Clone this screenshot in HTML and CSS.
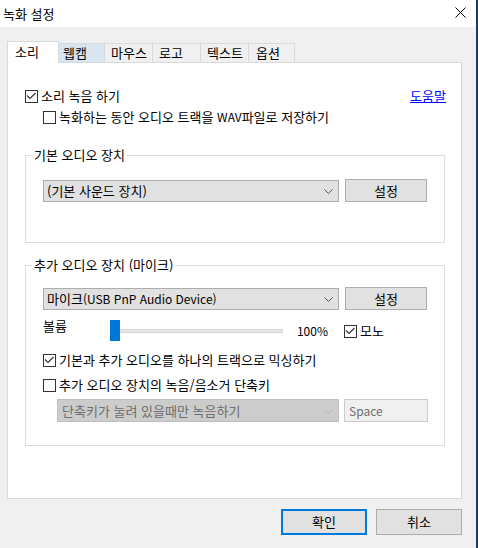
FILE: index.html
```html
<!DOCTYPE html>
<html lang="ko">
<head>
<meta charset="utf-8">
<title>녹화 설정</title>
<link rel="stylesheet" href="styles.css">
</head>
<body>
<div class="window">
  <div class="titlebar">
    <span class="title">녹화 설정</span>
    <svg class="close" width="11" height="11" viewBox="0 0 11 11"><path d="M0.5 0.5L10.5 10.5M10.5 0.5L0.5 10.5" stroke="#000" stroke-width="1" fill="none"/></svg>
  </div>
  <div class="body">
    <div class="tabs">
      <div class="tab active tab-sound">소리</div>
      <div class="tab hover tab-cam">웹캠</div>
      <div class="tab tab-mouse">마우스</div>
      <div class="tab tab-logo">로고</div>
      <div class="tab tab-text">텍스트</div>
      <div class="tab last tab-opt">옵션</div>
    </div>
    <div class="panel">
      <div class="row row-rec">
        <div class="check">
          <span class="box"><svg width="11" height="11" viewBox="0 0 11 11"><path d="M1 4.5L4 7.5L9.5 2" stroke="#333" stroke-width="1.1" fill="none"/></svg></span>
          <span class="label">소리 녹음 하기</span>
        </div>
        <a class="help" href="#">도움말</a>
      </div>
      <div class="row row-wav">
        <div class="check">
          <span class="box"></span>
          <span class="label">녹화하는 동안 오디오 트랙을 <span class="latin">WAV</span>파일로 저장하기</span>
        </div>
      </div>

      <fieldset class="group group-main">
        <legend>기본 오디오 장치</legend>
        <div class="device-row">
          <div class="combo"><span class="combo-text">(기본 사운드 장치)</span><svg class="chev" width="9" height="5" viewBox="0 0 9 5"><path d="M0.5 0.5L4.5 4.5L8.5 0.5" stroke="#555" stroke-width="1" fill="none"/></svg></div>
          <div class="btn btn-set">설정</div>
        </div>
      </fieldset>

      <fieldset class="group group-extra">
        <legend>추가 오디오 장치 (마이크)</legend>
        <div class="device-row">
          <div class="combo"><span class="combo-text">마이크<span class="latin">(USB PnP Audio Device)</span></span><svg class="chev" width="9" height="5" viewBox="0 0 9 5"><path d="M0.5 0.5L4.5 4.5L8.5 0.5" stroke="#555" stroke-width="1" fill="none"/></svg></div>
          <div class="btn btn-set">설정</div>
        </div>
        <div class="volume-row">
          <span class="vol-label">볼륨</span>
          <div class="slider">
            <div class="track"></div>
            <div class="thumb"></div>
          </div>
          <span class="pct latin">100%</span>
          <div class="check mono">
            <span class="box"><svg width="11" height="11" viewBox="0 0 11 11"><path d="M1 4.5L4 7.5L9.5 2" stroke="#333" stroke-width="1.1" fill="none"/></svg></span>
            <span class="label">모노</span>
          </div>
        </div>
        <div class="row row-mix">
          <div class="check">
            <span class="box"><svg width="11" height="11" viewBox="0 0 11 11"><path d="M1 4.5L4 7.5L9.5 2" stroke="#333" stroke-width="1.1" fill="none"/></svg></span>
            <span class="label">기본과 추가 오디오를 하나의 트랙으로 믹싱하기</span>
          </div>
        </div>
        <div class="row row-hotkey">
          <div class="check">
            <span class="box"></span>
            <span class="label">추가 오디오 장치의 녹음/음소거 단축키</span>
          </div>
        </div>
        <div class="hotkey-row">
          <div class="combo disabled"><span class="combo-text">단축키가 눌려 있을때만 녹음하기</span><svg class="chev" width="9" height="5" viewBox="0 0 9 5"><path d="M0.5 0.5L4.5 4.5L8.5 0.5" stroke="#b5b5b5" stroke-width="1" fill="none"/></svg></div>
          <div class="keybox latin">Space</div>
        </div>
      </fieldset>
    </div>
    <div class="footer">
      <div class="btn btn-foot btn-default">확인</div>
      <div class="btn btn-foot">취소</div>
    </div>
  </div>
</div>
</body>
</html>
```

FILE: styles.css
```css
* { box-sizing: border-box; }
html, body { margin: 0; padding: 0; }
body {
  font-family: "Noto Sans CJK KR", "Noto Sans", sans-serif;
  font-size: 13px;
  line-height: 16px;
  color: #000;
}
.latin { font-size: 12px; }
.window {
  width: 478px;
  height: 548px;
  border-right: 2px solid #1d3a5f;
  background: #f0f0f0;
  display: flex;
  flex-direction: column;
}
.titlebar {
  height: 27px;
  background: #fff;
  display: flex;
  align-items: center;
  justify-content: space-between;
  padding-left: 3px;
}
.close {
  margin-right: 10px;
  margin-bottom: 3px;
}
.body {
  flex: 1;
  padding: 14px 14px 0 7px;
  display: flex;
  flex-direction: column;
}
.tabs {
  height: 21px;
  display: flex;
  align-items: flex-end;
}
.tab {
  height: 19px;
  border-top: 1px solid #d9d9d9;
  border-left: 1px solid #d9d9d9;
  background: #f0f0f0;
  padding-top: 1px;
  white-space: nowrap;
}
.tab.last { border-right: 1px solid #d9d9d9; }
.tab.active {
  height: 22px;
  margin-bottom: -1px;
  background: #fff;
  border-right: 1px solid #d9d9d9;
  padding-top: 2px;
  position: relative;
  z-index: 1;
}
.tab.hover { background: #d8e6f2; border-left: none; }
.tab-sound { width: 52px; padding-left: 7px; }
.tab-cam { width: 45px; padding-left: 4px; }
.tab-mouse { width: 48px; padding-left: 6px; }
.tab-logo { width: 48px; padding-left: 6px; }
.tab-text { width: 48px; padding-left: 6px; }
.tab-opt { width: 47px; padding-left: 7px; }

.panel {
  width: 455px;
  height: 437px;
  background: #fff;
  border: 1px solid #d9d9d9;
  padding: 25px 16px 0 17px;
}
.row {
  display: flex;
  align-items: center;
  justify-content: space-between;
  height: 16px;
}
.row-wav { margin-top: 5px; padding-left: 18px; }
.check {
  display: flex;
  align-items: center;
  white-space: nowrap;
}
.box {
  width: 13px;
  height: 13px;
  border: 1px solid #333;
  background: #fff;
  display: flex;
  align-items: center;
  justify-content: center;
  margin-right: 3px;
}
.help {
  color: #0000ff;
  text-decoration: underline;
  margin-right: -1px;
}

.group {
  margin: 0;
  padding: 0;
  min-width: 0;
  border: 1px solid #dcdcdc;
}
.group legend {
  padding: 0 2px;
  margin-left: 6px;
  line-height: 16px;
}
.group-main { margin-top: 22px; padding-bottom: 40px; }
.group-extra { margin-top: 14px; padding-bottom: 23px; }

.device-row {
  display: flex;
  align-items: flex-end;
  padding: 0 17px;
  gap: 6px;
}
.group-main .device-row { margin-top: 16px; }
.group-extra .device-row { margin-top: 14px; }

.combo {
  width: 296px;
  height: 22px;
  background: #e1e1e1;
  border: 1px solid #adadad;
  display: flex;
  align-items: center;
  justify-content: space-between;
  padding: 0 5px 0 3px;
  white-space: nowrap;
}
.chev { margin-top: 1px; }
.btn {
  height: 23px;
  background: #e1e1e1;
  border: 1px solid #adadad;
  display: flex;
  align-items: center;
  justify-content: center;
}
.btn-set { width: 82px; }

.volume-row {
  display: flex;
  align-items: flex-start;
  margin-top: 8px;
  padding-left: 17px;
}
.vol-label { width: 67px; }
.slider {
  width: 173px;
  height: 21px;
  margin-top: 2px;
  display: grid;
}
.track {
  grid-area: 1 / 1;
  align-self: center;
  height: 4px;
  background: #e7e7e7;
  border: 1px solid #d6d6d6;
  margin-top: 1px;
}
.thumb {
  grid-area: 1 / 1;
  width: 10px;
  height: 21px;
  background: #0078d7;
}
.pct {
  width: 45px;
  text-align: right;
  margin-top: 5px;
}
.mono { margin-left: 16px; margin-top: 5px; height: 16px; }

.row-mix { margin-top: 11px; padding-left: 17px; justify-content: flex-start; }
.row-hotkey { margin-top: 9px; padding-left: 17px; justify-content: flex-start; }

.hotkey-row {
  display: flex;
  align-items: flex-end;
  margin-top: 6px;
  padding-left: 31px;
  gap: 5px;
}
.combo.disabled {
  width: 282px;
  height: 23px;
  background: #cccccc;
  border-color: #bfbfbf;
  color: #6d6d6d;
  padding-left: 4px;
}
.keybox {
  width: 84px;
  height: 23px;
  background: #f0f0f0;
  border: 1px solid #cccccc;
  color: #6d6d6d;
  padding-left: 4px;
  display: flex;
  align-items: center;
}

.footer {
  display: flex;
  justify-content: flex-end;
  gap: 9px;
  margin-top: 10px;
}
.btn-foot { width: 86px; height: 26px; }
.btn-default { border: 2px solid #0078d7; }
```
